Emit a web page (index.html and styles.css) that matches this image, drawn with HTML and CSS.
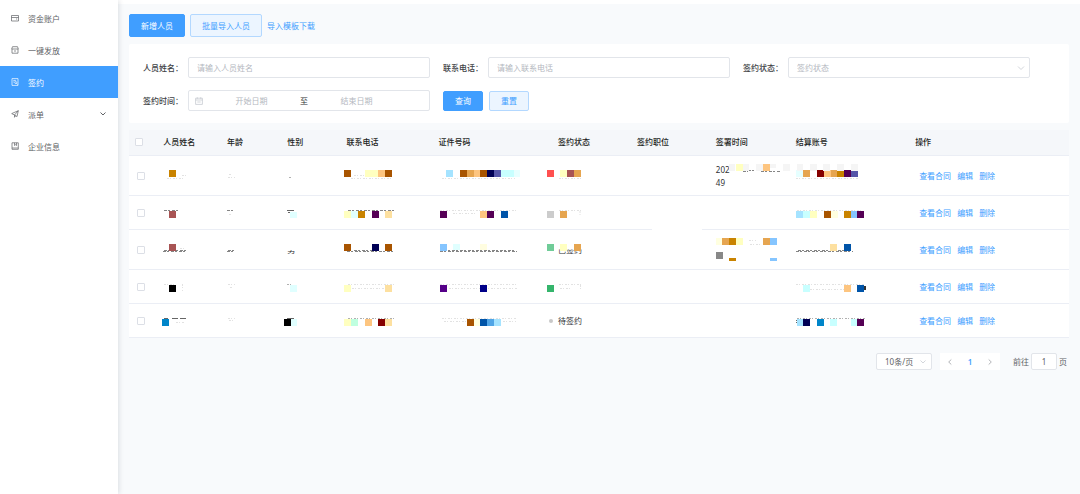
FILE: index.html
```html
<!DOCTYPE html>
<html lang="zh-CN">
<head>
<meta charset="utf-8">
<meta name="viewport" content="width=device-width, initial-scale=1">
<title>签约</title>
<link rel="stylesheet" href="styles.css">
</head>
<body>
<div class="app">
  <nav class="sidebar">
    <a class="nav-item" href="#"><svg class="icon" viewBox="0 0 8 8"><path d="M.5 1.500h7v5.500h-7zM.5 3.500h7M5 5h1.200"/></svg><span>资金账户</span></a>
    <a class="nav-item" href="#"><svg class="icon" viewBox="0 0 8 8"><path d="M1.500.7h5l.8 2.300H.7zM1 3v4.200h6V3M3 5h2"/></svg><span>一键发放</span></a>
    <a class="nav-item active" href="#"><svg class="icon" viewBox="0 0 8 8"><path d="M1 .6h6v6.800H1zM2.300 2.400h2.600M2.300 4h1.300"/><circle cx="4.800" cy="4.600" r="1"/><path d="M5.500 5.300l1 1.200"/></svg><span>签约</span></a>
    <a class="nav-item" href="#"><svg class="icon" viewBox="0 0 8 8"><path d="M.7 3.600L7.300.7 6 6.600 3.500 5zM3.500 5L7.300.7M3.500 5v2.300l1-1.500"/></svg><span>派单</span><svg class="icon nav-arrow" viewBox="0 0 8 8"><path d="M1.500 2.500L4 5l2.500-2.500"/></svg></a>
    <a class="nav-item" href="#"><svg class="icon" viewBox="0 0 8 8"><path d="M1 .8h6.300v5.200H1zM1 6v1.300h6.300V6M3.500.8v2.700l1-.8 1 .8V.8"/></svg><span>企业信息</span></a>
  </nav>

  <main class="main">
    <div class="toolbar">
      <button class="btn primary" type="button">新增人员</button>
      <button class="btn plain" type="button">批量导入人员</button>
      <a class="link" href="#">导入模板下载</a>
    </div>

    <form class="card filters">
      <div class="field">
        <label for="name">人员姓名：</label>
        <input class="control" id="name" type="text" placeholder="请输入人员姓名">
      </div>
      <div class="field">
        <label for="phone">联系电话：</label>
        <input class="control" id="phone" type="text" placeholder="请输入联系电话">
      </div>
      <div class="field">
        <label for="status">签约状态：</label>
        <div class="select-wrap">
          <select class="control placeholder" id="status"><option>签约状态</option></select>
          <svg class="icon select-arrow" viewBox="0 0 8 8"><path d="M1 2.500L4 5.500l3-3"/></svg>
        </div>
      </div>
      <div class="field">
        <label for="start">签约时间：</label>
        <div class="control range">
          <svg class="icon" viewBox="0 0 8 8"><path d="M.6 1.200h6.800v6.200H.6zM.6 3h6.800M2.300.3v1.500M5.700.3v1.500M2.300 5h3.400"/></svg>
          <input id="start" type="text" placeholder="开始日期">
          <span>至</span>
          <input type="text" placeholder="结束日期" aria-label="结束日期">
        </div>
      </div>
      <div class="actions">
        <button class="btn primary small" type="button">查询</button>
        <button class="btn plain small" type="reset">重置</button>
      </div>
    </form>

    <table class="table">
      <colgroup>
        <col class="c-check"><col class="c-name"><col class="c-age"><col class="c-sex"><col class="c-phone"><col class="c-id"><col class="c-status"><col class="c-job"><col class="c-time"><col class="c-account"><col class="c-ops">
      </colgroup>
      <thead>
        <tr>
          <th class="check"><input type="checkbox" aria-label="全选"></th>
          <th>人员姓名</th><th>年龄</th><th>性别</th><th>联系电话</th><th>证件号码</th><th>签约状态</th><th>签约职位</th><th>签署时间</th><th>结算账号</th><th>操作</th>
        </tr>
      </thead>
      <tbody>
        <tr class="tall">
          <td class="check"><input type="checkbox" aria-label="选择第1行"></td>
          <td><svg class="mosaic"><path class="speck faint" d="M4 9.500h18M19 6.500h4"/><path fill="#c98300" d="M6 1h7v7H6z"/></svg></td>
          <td><svg class="mosaic"><path class="speck faint" d="M1 8.500h7M2 5.500h3"/></svg></td>
          <td><svg class="mosaic"><path class="speck" d="M2 8.500h2"/></svg></td>
          <td><svg class="mosaic"><path class="speck faint" d="M5 9.500h42M8 6.500h12"/><path fill="#a85400" d="M-2 1h7v7h-7zM39 1h7v7h-7z"/><path fill="#ffffc0" d="M19 1h13v7H19z"/><path fill="#fdc580" d="M32 1h7v7h-7z"/></svg></td>
          <td><svg class="mosaic"><path class="speck faint" d="M3 9.500h73"/><path fill="#a5e3ff" d="M7 1h7v7H7z"/><path fill="#a85400" d="M21 1h7v7h-7zM41 1h7v7h-7z"/><path fill="#e6a550" d="M28 1h7v7h-7z"/><path fill="#fdc580" d="M35 1h6v7h-6z"/><path fill="#000055" d="M48 1h7v7h-7z"/><path fill="#5555a8" d="M55 1h7v7h-7z"/><path fill="#c8ffff" d="M62 1h13v7H62z"/><path fill="#e8ffff" d="M75 1h6v7h-6z"/></svg></td>
          <td><svg class="mosaic"><path class="speck faint" d="M1 9.500h22"/><path fill="#ff5050" d="M-11 1h7v7h-7z"/><path fill="#ffffc0" d="M2 1h7v7H2z"/><path fill="#a85454" d="M9 1h7v7H9z"/><path fill="#e6a550" d="M16 1h7v7h-7z"/></svg></td>
          <td></td>
          <td><div class="sign-time"><span>202</span><span>49</span><svg class="mosaic cover"><path class="speck dark" d="M27 8.500h5M32 7.500h11M45 8.500h19"/><path fill="#f5f5f5" d="M13 1h6v7h-6zM26 1h7v7h-7zM40 1h7v7h-7zM53 1h7v4h-7zM67 1h7v7h-7zM81 1h6v7h-6zM94 1h7v7h-7zM107 1h7v7h-7zM121 1h7v7h-7zM135 1h7v7h-7z"/><path fill="#ffffc0" d="M20 1h7v7h-7z"/><path fill="#fdc580" d="M47 1h7v7h-7z"/></svg></div></td>
          <td><svg class="mosaic"><path class="speck faint" d="M0 9.500h62"/><path fill="#e6ffff" d="M0 1h7v7H0z"/><path fill="#e6a550" d="M7 1h7v7H7zM34 1h7v7h-7z"/><path fill="#850000" d="M21 1h7v7h-7z"/><path fill="#fdc580" d="M28 1h7v7h-7z"/><path fill="#c98300" d="M41 1h7v7h-7z"/><path fill="#550055" d="M48 1h7v7h-7z"/><path fill="#5555a8" d="M55 1h7v7h-7z"/></svg></td>
          <td class="ops"><a href="#">查看合同</a><a href="#">编辑</a><a href="#">删除</a></td>
        </tr>
        <tr>
          <td class="check"><input type="checkbox" aria-label="选择第2行"></td>
          <td><svg class="mosaic"><path class="speck dark" d="M1 4.500h16"/><path fill="#a85454" d="M6 5h7v7H6z"/></svg></td>
          <td><svg class="mosaic"><path class="speck dark" d="M0 4.500h8"/><path class="speck faint" d="M2 8.500h3"/></svg></td>
          <td><svg class="mosaic"><path class="speck solid" d="M0 4.500h7M1 6.500h5"/><path fill="#e0ffff" d="M3 6h7v6H3z"/></svg></td>
          <td><svg class="mosaic"><path class="speck dark" d="M2 4.500h46"/><path fill="#ffffc0" d="M-2 5h7v7h-7z"/><path fill="#e0ffff" d="M5 5h7v7H5z"/><path fill="#c98300" d="M12 5h7v7h-7z"/><path fill="#550055" d="M26 5h7v7h-7z"/><path fill="#fde0a0" d="M39 5h7v7h-7z"/></svg></td>
          <td><svg class="mosaic"><path class="speck faint" d="M1 4.500h77M14 7.500h22"/><path fill="#550055" d="M1 5h7v7H1z"/><path fill="#fdc580" d="M41 5h7v7h-7z"/><path fill="#550055" d="M48 5h7v7h-7z"/><path fill="#0054a8" d="M62 5h7v7h-7z"/></svg></td>
          <td><svg class="mosaic"><path class="speck faint" d="M1 4.500h22M22 5v6"/><path fill="#cccccc" d="M-11 5h7v7h-7z"/><path fill="#e6a550" d="M2 5h7v7H2z"/></svg></td>
          <td><svg class="mosaic"><path fill="#ffffff" d="M15 20h50v8H15z"/></svg></td>
          <td></td>
          <td><svg class="mosaic"><path class="speck faint" d="M1 4.500h66"/><path fill="#a5e3ff" d="M0 5h7v7H0z"/><path fill="#c8ffff" d="M7 5h7v7H7z"/><path fill="#ffffc0" d="M14 5h7v7h-7z"/><path fill="#a85400" d="M28 5h7v7h-7z"/><path fill="#ffffe0" d="M35 5h7v7h-7z"/><path fill="#c98300" d="M48 5h7v7h-7z"/><path fill="#85c5ff" d="M55 5h7v7h-7z"/><path fill="#550055" d="M61 5h7v7h-7z"/></svg></td>
          <td class="ops"><a href="#">查看合同</a><a href="#">编辑</a><a href="#">删除</a></td>
        </tr>
        <tr class="tall">
          <td class="check"><input type="checkbox" aria-label="选择第3行"></td>
          <td><svg class="mosaic"><path class="speck dark" d="M0 8.500h24M1 7.500h22"/><path class="speck faint" d="M17 5.500h4"/><path fill="#a85454" d="M6 1h7v7H6z"/></svg></td>
          <td><svg class="mosaic"><path class="speck dark" d="M0 8.500h8M1 7.500h6"/></svg></td>
          <td><span class="cut">男</span></td>
          <td><svg class="mosaic"><path class="speck dark" d="M1 8.500h47M8 7.500h18"/><path fill="#a85400" d="M-2 1h7v7h-7zM39 1h7v7h-7z"/><path fill="#000055" d="M26 1h7v7h-7z"/></svg></td>
          <td><svg class="mosaic"><path class="speck dark" d="M1 8.500h77M5 7.500h70"/><path fill="#85c5ff" d="M1 1h7v7H1z"/><path fill="#e0ffff" d="M14 1h7v6h-7z"/><path fill="#fffde0" d="M41 1h7v6h-7z"/></svg></td>
          <td><div class="sign-status"><span class="cut">已签约</span><svg class="mosaic cover"><path fill="#70cc98" d="M-11 1h7v7h-7z"/><path fill="#ffffc0" d="M2 1h7v7H2z"/><path fill="#e6a550" d="M16 1h7v7h-7z"/></svg></div></td>
          <td></td>
          <td><div class="sign-time"><svg class="mosaic cover"><path fill="#ffffe0" d="M0 1h6v7H0z"/><path fill="#e6a550" d="M6 1h7v7H6zM47 1h7v7h-7z"/><path fill="#c98300" d="M13 1h7v7h-7zM13 21h7v3h-7z"/><path fill="#ffffc0" d="M20 1h7v7h-7z"/><path fill="#85c5ff" d="M54 1h7v7h-7zM54 21h7v3h-7z"/><path fill="#888888" d="M0 15h7v7H0z"/><path class="speck faint" d="M33 3.500h7M34 7.500h12"/></svg></div></td>
          <td><svg class="mosaic"><path class="speck dark" d="M0 8.500h57M2 7.500h53"/><path fill="#fde0a0" d="M34 1h7v7h-7z"/><path fill="#0054a8" d="M48 1h7v7h-7z"/></svg></td>
          <td class="ops"><a href="#">查看合同</a><a href="#">编辑</a><a href="#">删除</a></td>
        </tr>
        <tr>
          <td class="check"><input type="checkbox" aria-label="选择第4行"></td>
          <td><svg class="mosaic"><path class="speck faint" d="M1 4.500h12M19.500 4v7"/><path fill="#000000" d="M6 5h7v7H6z"/></svg></td>
          <td><svg class="mosaic"><path class="speck faint" d="M1 4.500h7M3 7.500h2"/></svg></td>
          <td><svg class="mosaic"><path class="speck" d="M0 4.500h6"/><path fill="#e0ffff" d="M3 5h7v7H3z"/></svg></td>
          <td><svg class="mosaic"><path class="speck faint" d="M2 4.500h46M6 8.500h32"/><path fill="#ffffc0" d="M-2 5h7v7h-7z"/><path fill="#fde0a0" d="M39 5h7v7h-7z"/></svg></td>
          <td><svg class="mosaic"><path class="speck faint" d="M1 4.500h77M10 8.500h68"/><path fill="#550088" d="M1 5h7v7H1z"/><path fill="#000088" d="M41 5h7v7h-7z"/></svg></td>
          <td><svg class="mosaic"><path class="speck faint" d="M1 4.500h22M2 8.500h12M22.500 5v6"/><path fill="#35b56c" d="M-11 5h7v7h-7z"/></svg></td>
          <td></td>
          <td></td>
          <td><svg class="mosaic"><path class="speck faint" d="M0 4.500h68M14 9.500h34"/><path fill="#c8ffff" d="M7 5h7v7H7z"/><path fill="#fdc580" d="M48 5h7v7h-7z"/><path fill="#333333" d="M68 6h2v4h-2z"/><path fill="#0054a8" d="M61 5h7v7h-7z"/></svg></td>
          <td class="ops"><a href="#">查看合同</a><a href="#">编辑</a><a href="#">删除</a></td>
        </tr>
        <tr>
          <td class="check"><input type="checkbox" aria-label="选择第5行"></td>
          <td><svg class="mosaic"><path class="speck solid" d="M1 4.500h4M9 4.500h6M17 4.500h6"/><path class="speck faint" d="M13 8.500h9"/><path fill="#0085c9" d="M-1 5h7v7h-7z"/></svg></td>
          <td><svg class="mosaic"><path class="speck faint" d="M1 4.500h7M2 6.500h5"/></svg></td>
          <td><svg class="mosaic"><path class="speck solid" d="M0 4.500h7"/><path fill="#000000" d="M-3 5h7v7h-7z"/><path fill="#e0ffff" d="M4 5h6v7H4z"/></svg></td>
          <td><svg class="mosaic"><path class="speck" d="M2 4.500h46"/><path fill="#ffffc0" d="M-2 5h7v7h-7z"/><path fill="#c0ffe0" d="M5 5h7v7H5z"/><path fill="#fdc580" d="M19 5h7v7h-7z"/><path fill="#850000" d="M32 5h7v7h-7z"/><path fill="#fde0a0" d="M39 5h7v7h-7z"/></svg></td>
          <td><svg class="mosaic"><path class="speck faint" d="M3 4.500h75M5 7.500h22M58 7.500h19"/><path fill="#a85400" d="M28 5h7v7h-7z"/><path fill="#ffffe0" d="M35 5h6v7h-6z"/><path fill="#0054a8" d="M41 5h7v7h-7z"/><path fill="#50a5e6" d="M48 5h7v7h-7z"/><path fill="#a5e3ff" d="M55 5h7v7h-7z"/></svg></td>
          <td><div class="sign-status dot">待签约</div></td>
          <td></td>
          <td></td>
          <td><svg class="mosaic"><path class="speck" d="M1 4.500h68"/><path class="speck solid" d="M0 6.500h2M0 8.500h2"/><path fill="#a5e3ff" d="M1 5h6v7H1z"/><path fill="#000055" d="M7 5h7v7H7z"/><path fill="#0085c9" d="M21 5h7v7h-7z"/><path fill="#c8ffff" d="M34 5h7v7h-7zM55 5h6v7h-6z"/><path fill="#550055" d="M61 5h7v7h-7z"/></svg></td>
          <td class="ops"><a href="#">查看合同</a><a href="#">编辑</a><a href="#">删除</a></td>
        </tr>
      </tbody>
    </table>

    <div class="pagination">
      <div class="select-wrap size-wrap">
        <select class="control size" aria-label="每页条数"><option>10条/页</option></select>
        <svg class="icon select-arrow" viewBox="0 0 8 8"><path d="M1.500 2.500L4 5l2.500-2.500"/></svg>
      </div>
      <div class="pager">
        <button type="button" aria-label="上一页"><svg class="icon" viewBox="0 0 8 8"><path d="M5.300 1.500L2.700 4l2.600 2.500"/></svg></button>
        <button type="button" class="current">1</button>
        <button type="button" aria-label="下一页"><svg class="icon" viewBox="0 0 8 8"><path d="M2.700 1.500L5.300 4 2.700 6.500"/></svg></button>
      </div>
      <div class="jump"><label for="page">前往</label><input class="control" id="page" type="text" value="1"><span>页</span></div>
    </div>
  </main>
</div>
</body>
</html>
```

FILE: styles.css
```css
* { box-sizing: border-box; }

body {
  margin: 0;
  background: #f8fafc;
  color: #606266;
  font: 8px/13px "Noto Sans", "Noto Sans CJK SC", sans-serif;
}

input, select, button { font: inherit; color: inherit; margin: 0; }
a { text-decoration: none; }

.app { display: flex; min-height: 100vh; }

.icon {
  width: 8px;
  height: 8px;
  flex: none;
  display: block;
  fill: none;
  stroke: currentColor;
  stroke-width: .7;
}

/* Sidebar */
.sidebar {
  width: 118px;
  flex: none;
  padding-top: 2px;
  background: #fff;
  box-shadow: 1px 0 5px rgba(0, 21, 41, .12);
  z-index: 1;
}
.nav-item {
  display: flex;
  align-items: center;
  gap: 9px;
  height: 32px;
  padding: 0 11px;
  color: #606266;
}
.nav-item.active { background: #409eff; color: #fff; }
.nav-arrow { margin-left: auto; stroke-width: 1; }

/* Content */
.main {
  flex: 1;
  min-width: 0;
  padding: 10px 11px 16px;
  border-top: 4px solid #fff;
}
.toolbar { display: flex; align-items: center; gap: 5px; margin-bottom: 7px; }
.btn {
  height: 23px;
  padding: 0 11px;
  border: 1px solid #409eff;
  border-radius: 2px;
  line-height: 13px;
}
.btn.small { height: 20px; }
.btn.primary { background: #409eff; color: #fff; }
.btn.plain { background: #ecf5ff; border-color: #b3d8ff; color: #409eff; }
.link, .ops a { color: #409eff; }

.card { background: #fff; border-radius: 2px; }
.filters {
  display: grid;
  grid-template-columns: repeat(3, minmax(0, 1fr));
  gap: 12px 13px;
  padding: 13px 39px 12px 14px;
  margin-bottom: 7px;
}
.field { display: flex; align-items: center; }
.field label { width: 45px; flex: none; font-weight: 500; color: #404246; white-space: nowrap; }
.control {
  width: 100%;
  min-width: 0;
  height: 21px;
  padding: 0 8px;
  border: 1px solid #e2e5ea;
  border-radius: 2px;
  background: #fff;
  outline: 0;
  appearance: none;
}
::placeholder { color: #b4b8c0; opacity: 1; }
.control.placeholder { color: #b4b8c0; }
.select-wrap { position: relative; flex: 1; }
.select-wrap select { display: block; }
.select-arrow {
  position: absolute;
  right: 5px;
  top: 50%;
  translate: 0 -50%;
  color: #c0c4cc;
  pointer-events: none;
}
.range { display: flex; align-items: center; padding: 0 24px 0 6px; color: #303133; }
.range .icon { color: #c0c4cc; }
.range input { flex: 1; min-width: 0; padding: 0; border: 0; outline: 0; background: none; text-align: center; }
.actions { display: flex; align-items: center; gap: 6px; }

/* Table */
.table { width: 100%; table-layout: fixed; border-collapse: separate; border-spacing: 0; background: #fff; }
.c-check { width: 3%; }
.c-name { width: 6.8%; }
.c-age { width: 6.4%; }
.c-sex { width: 6.3%; }
.c-phone { width: 9.8%; }
.c-id { width: 12.7%; }
.c-status, .c-job { width: 8.4%; }
.c-time { width: 8.5%; }
.c-account { width: 12.7%; }
.c-ops { width: 17%; }
th, td { padding: 0 6px; text-align: left; border-bottom: 1px solid #ebeef5; white-space: nowrap; }
th { height: 26px; padding-bottom: 2px; background: #f5f7fa; color: #1d1f23; font-weight: 500; }
td { height: 34px; color: #303133; }
.tall td { height: 40px; }
.check input {
  display: block;
  width: 8px;
  height: 8px;
  border: 1px solid #dcdfe6;
  border-radius: 1px;
  background: #fff;
  appearance: none;
}
td.check { padding-left: 8px; }
.ops a { margin-right: 6px; }
td.ops { padding-left: 10px; }

/* Masked values */
.mosaic { display: block; width: 100%; height: 14px; overflow: visible; }
.mosaic.cover { position: absolute; left: 0; top: 0; height: 100%; }
.speck { fill: none; stroke: #b0b0b0; stroke-dasharray: 2 1 1 2; }
.speck.faint { stroke: #e2e2e2; }
.speck.dark { stroke: #858585; stroke-dasharray: 3 1 2 2; }
.speck.solid { stroke: #666; stroke-dasharray: none; }
.sign-time { position: relative; height: 26px; }
.sign-time span { display: block; }
.sign-status { position: relative; height: 14px; }
.cut { display: block; clip-path: inset(7px 0 0 0); }
.dot::before {
  content: "";
  position: absolute;
  left: -9px;
  top: 5px;
  width: 4px;
  height: 4px;
  border-radius: 50%;
  background: #c8c8c8;
}

/* Pagination */
.pagination { display: flex; justify-content: flex-end; align-items: center; gap: 8px; padding: 15px 2px 0 0; }
.pagination .control { height: 17px; }
.size-wrap { flex: none; width: 56px; }
.pager { display: flex; width: 60px; height: 17px; background: #fff; }
.pager button { flex: 1; display: grid; place-items: center; padding: 0; border: 0; background: none; color: #909399; }
.pager .current { color: #409eff; font-weight: 600; }
.jump { display: flex; align-items: center; gap: 2px; margin-left: 5px; }
.jump .control { width: 26px; padding: 0; text-align: center; }
```
